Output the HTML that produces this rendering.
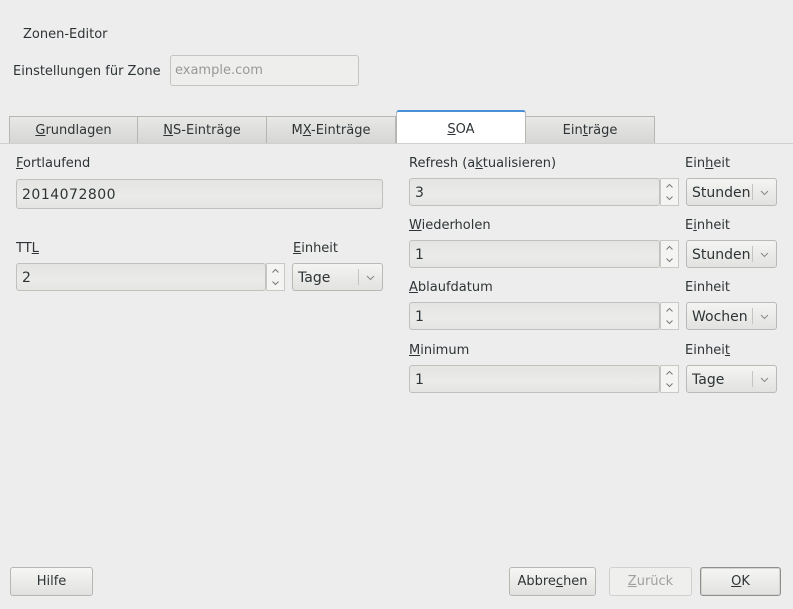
<!DOCTYPE html><html><head><style>
body{margin:0;width:793px;height:609px;background:#ededed;font-family:"DejaVu Sans","Liberation Sans",sans-serif;font-size:13px;color:#2e3436;position:relative;overflow:hidden}
.a{position:absolute;white-space:nowrap}
.tab{position:absolute;top:116px;height:27px;border:1px solid #b6b6b3;border-bottom:none;background:linear-gradient(#e8e8e7,#d6d6d4);text-align:center;line-height:27px;box-sizing:border-box}
.entry{position:absolute;height:28px;border:1px solid #c0c0bd;border-radius:3px;background:linear-gradient(#e4e4e2,#ebebea 60%,#e4e4e2);box-sizing:border-box;line-height:28px;padding-left:5px;font-size:14px}
.spin{position:absolute;width:19px;height:28px;box-sizing:border-box;border:1px solid #c8c8c5;background:#f4f4f3}
.combo{position:absolute;width:91px;height:28px;box-sizing:border-box;border:1px solid #b9b9b6;border-radius:3px;background:linear-gradient(#f4f4f3,#e2e2e0);line-height:28px;padding-left:5px;font-size:14px}
.combo:after{content:"";position:absolute;right:23px;top:5px;height:16px;border-left:1px solid #c4c4c1}
.combo svg{position:absolute;right:7px;top:11px}
.btn{position:absolute;top:567px;height:29px;box-sizing:border-box;border:1px solid #b6b6b3;border-radius:3px;background:linear-gradient(#f6f6f5,#e1e1df);text-align:center;line-height:28px}
u{text-decoration:underline}
</style></head><body>
<div class="a" style="left:23px;top:27px">Zonen-Editor</div>
<div class="a" style="left:13px;top:64px">Einstellungen für Zone</div>
<div class="a" style="left:170px;top:55px;width:189px;height:31px;border:1px solid #c4c4c1;border-radius:3px;background:#eeeeed;box-sizing:border-box;line-height:30px;padding-left:4px;color:#999">example.com</div>
<div class="tab" style="left:9px;width:129px"><u>G</u>rundlagen</div>
<div class="tab" style="left:137px;width:130px"><u>N</u>S-Einträge</div>
<div class="tab" style="left:266px;width:130px">M<u>X</u>-Einträge</div>
<div class="tab" style="left:525px;width:130px">Ein<u>t</u>räge</div>
<div class="tab" style="left:396px;top:110px;height:34px;width:130px;background:#fff;border-top:2px solid #4a90d9;border-radius:3px 3px 0 0;line-height:36px"><u>S</u>OA</div>
<div class="a" style="left:0;top:143px;width:793px;height:1px;background:#d0d0ce"></div>

<div class="a" style="left:16px;top:156px"><u>F</u>ortlaufend</div>
<div class="entry" style="left:16px;top:179px;width:367px;height:30px;line-height:30px;letter-spacing:.5px">2014072800</div>
<div class="a" style="left:16px;top:241px">TT<u>L</u></div>
<div class="entry" style="left:16px;top:263px;width:250px">2</div>
<div class="spin" style="left:266px;top:263px"><svg width="17" height="26"><path d="M5.5 8.5l3-3 3 3M5.5 17.5l3 3 3-3" fill="none" stroke="#777" stroke-width="1"/></svg></div>
<div class="a" style="left:293px;top:241px"><u>E</u>inheit</div>
<div class="combo" style="left:292px;top:263px">Tage<svg width="9" height="6"><path d="M1 1l3.5 3.5L8 1" fill="none" stroke="#888"/></svg></div>

<div class="a" style="left:409px;top:156px">Refresh (a<u>k</u>tualisieren)</div>
<div class="a" style="left:685px;top:156px">Ein<u>h</u>eit</div>
<div class="entry" style="left:409px;top:178px;width:251px">3</div>
<div class="spin" style="left:660px;top:178px"><svg width="17" height="26"><path d="M5.5 8.5l3-3 3 3M5.5 17.5l3 3 3-3" fill="none" stroke="#777" stroke-width="1"/></svg></div>
<div class="combo" style="left:686px;top:178px">Stunden<svg width="9" height="6"><path d="M1 1l3.5 3.5L8 1" fill="none" stroke="#888"/></svg></div>

<div class="a" style="left:409px;top:218px"><u>W</u>iederholen</div>
<div class="a" style="left:685px;top:218px">E<u>i</u>nheit</div>
<div class="entry" style="left:409px;top:240px;width:251px">1</div>
<div class="spin" style="left:660px;top:240px"><svg width="17" height="26"><path d="M5.5 8.5l3-3 3 3M5.5 17.5l3 3 3-3" fill="none" stroke="#777" stroke-width="1"/></svg></div>
<div class="combo" style="left:686px;top:240px">Stunden<svg width="9" height="6"><path d="M1 1l3.5 3.5L8 1" fill="none" stroke="#888"/></svg></div>

<div class="a" style="left:409px;top:280px"><u>A</u>blaufdatum</div>
<div class="a" style="left:685px;top:280px">Einheit</div>
<div class="entry" style="left:409px;top:302px;width:251px">1</div>
<div class="spin" style="left:660px;top:302px"><svg width="17" height="26"><path d="M5.5 8.5l3-3 3 3M5.5 17.5l3 3 3-3" fill="none" stroke="#777" stroke-width="1"/></svg></div>
<div class="combo" style="left:686px;top:302px">Wochen<svg width="9" height="6"><path d="M1 1l3.5 3.5L8 1" fill="none" stroke="#888"/></svg></div>

<div class="a" style="left:409px;top:343px"><u>M</u>inimum</div>
<div class="a" style="left:685px;top:343px">Einhei<u>t</u></div>
<div class="entry" style="left:409px;top:365px;width:251px">1</div>
<div class="spin" style="left:660px;top:365px"><svg width="17" height="26"><path d="M5.5 8.5l3-3 3 3M5.5 17.5l3 3 3-3" fill="none" stroke="#777" stroke-width="1"/></svg></div>
<div class="combo" style="left:686px;top:365px">Tage<svg width="9" height="6"><path d="M1 1l3.5 3.5L8 1" fill="none" stroke="#888"/></svg></div>

<div class="btn" style="left:10px;width:83px">Hilfe</div>
<div class="btn" style="left:509px;width:87px">Abbre<u>c</u>hen</div>
<div class="btn" style="left:609px;width:83px;background:#efefee;border-color:#d0d0ce;color:#a0a0a0"><u>Z</u>urück</div>
<div class="btn" style="left:700px;width:81px;box-shadow:inset 0 0 0 1px #d4d4d2;border-color:#8f8f8c"><u>O</u>K</div>
</body></html>
